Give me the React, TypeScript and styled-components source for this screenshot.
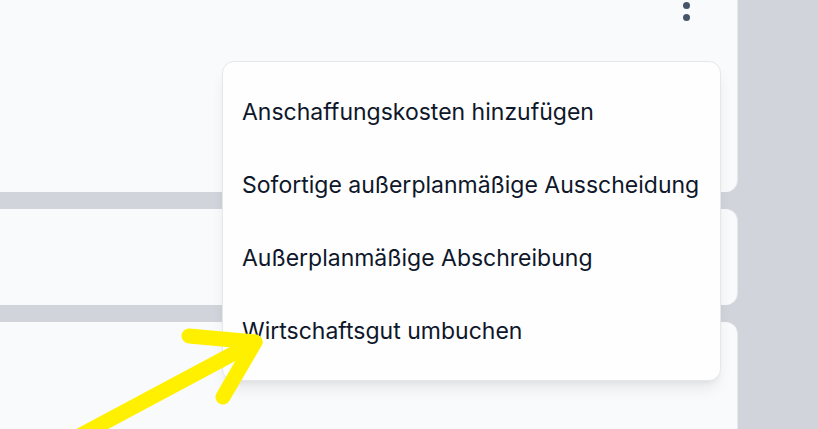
import React from 'react';
import styled, { createGlobalStyle } from 'styled-components';

const GlobalStyle = createGlobalStyle`
  html, body {
    margin: 0;
    padding: 0;
    background: #d1d5db;
    font-family: Inter, "Noto Sans", sans-serif;
  }
`;

const Page = styled.div`
  position: relative;
  width: 818px;
  height: 429px;
  overflow: hidden;
  background: #d1d5db;
`;

const Column = styled.div`
  width: 737px;
  display: flex;
  flex-direction: column;
  gap: 17px;
`;

const Card = styled.section<{ $height: number; $first?: boolean }>`
  position: relative;
  height: ${p => p.$height}px;
  background: #f9fafb;
  border-radius: ${p => (p.$first ? '0 0 12px 0' : '0 12px 12px 0')};
  box-shadow: 1px 0 0 #e5e7eb;
`;

const Kebab = styled.button`
  position: absolute;
  right: 47px;
  top: -10px;
  display: flex;
  flex-direction: column;
  gap: 5px;
  padding: 0;
  border: none;
  background: transparent;

  span {
    width: 7px;
    height: 7px;
    border-radius: 50%;
    background: #475569;
  }
`;

const Menu = styled.ul`
  position: absolute;
  top: 61px;
  right: 16px;
  z-index: 2;
  width: 499px;
  box-sizing: border-box;
  margin: 0;
  padding: 13px 0;
  list-style: none;
  background: #fefefe;
  border: 1px solid #e5e7eb;
  border-radius: 12px;
  box-shadow: 0 10px 15px -3px rgba(0, 0, 0, 0.08), 0 4px 6px -4px rgba(0, 0, 0, 0.08);
`;

const MenuItem = styled.li`
  display: flex;
  align-items: center;
  height: 73px;
  padding: 0 19px;
  font-size: 23px;
  color: #0f172a;
  white-space: nowrap;
`;

const Arrow = styled.svg`
  position: absolute;
  left: 0;
  top: 0;
  z-index: 3;
  pointer-events: none;
`;

const items = [
  'Anschaffungskosten hinzufügen',
  'Sofortige außerplanmäßige Ausscheidung',
  'Außerplanmäßige Abschreibung',
  'Wirtschaftsgut umbuchen',
];

export default function App() {
  return (
    <Page>
      <GlobalStyle />
      <Column>
        <Card $height={192} $first>
          <Kebab aria-label="Mehr">
            <span />
            <span />
            <span />
          </Kebab>
          <Menu>
            {items.map(item => (
              <MenuItem key={item}>{item}</MenuItem>
            ))}
          </Menu>
        </Card>
        <Card $height={96} />
        <Card $height={140} />
      </Column>
      <Arrow width="818" height="429" viewBox="0 0 818 429">
        <g stroke="#fff000" strokeWidth="15" strokeLinecap="round" strokeLinejoin="round" fill="none">
          <line x1="66" y1="443" x2="255" y2="342" />
          <polyline points="189,336 255,342 223,397" />
        </g>
      </Arrow>
    </Page>
  );
}
